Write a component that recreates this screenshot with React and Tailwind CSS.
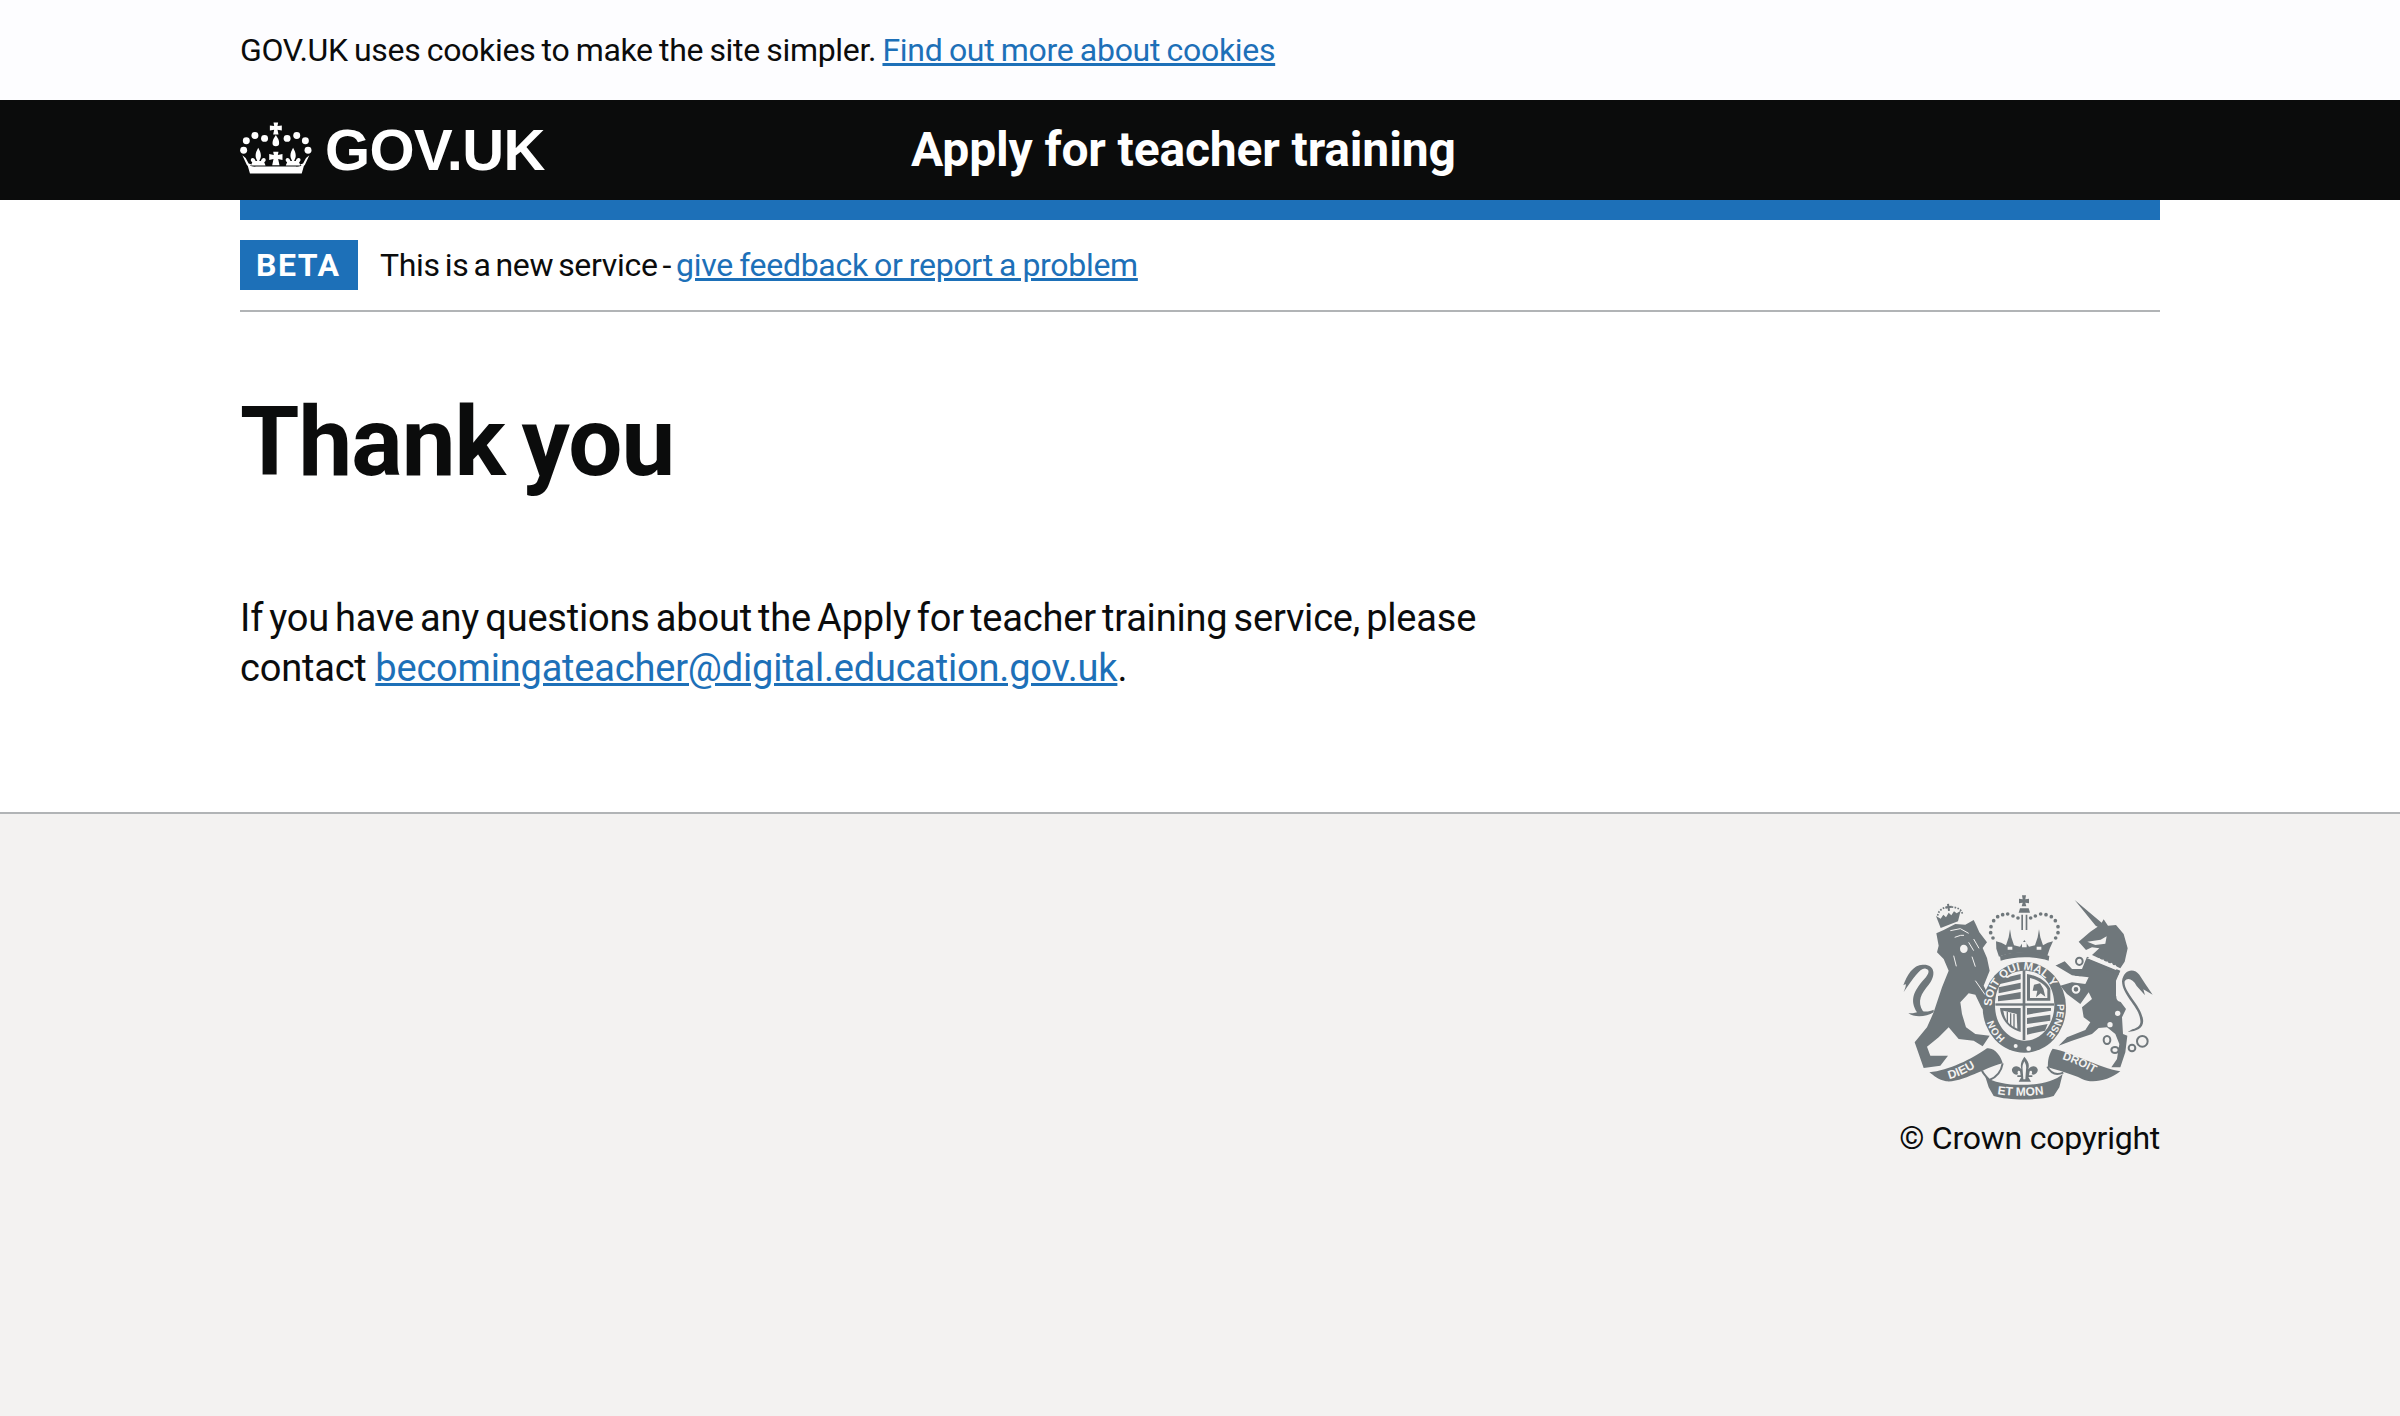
const gray = "#6f777b";
const bg = "#f3f2f1";

function Fleur({ x }) {
  return (
    <g transform={`translate(${x} 0)`}>
      <path d="M0 140c5 9 8 16 8 24 0 6-3 11-5 16h5c2-8 9-11 13-7 3 4 1 9-3 11l4 10H-4-0L-22 194l4-10c-4-2-6-7-3-11 4-4 11-1 13 7h5c-2-5-5-10-5-16 0-8 3-15 8-24z" />
    </g>
  );
}

function Crown() {
  return (
    <svg viewBox="60 60 220 165" width="73" height="55" className="block -mt-[4px]" aria-label="crown">
      <g fill="#fff">
        {[[79,119],[105,103],[134,112],[202,112],[231,103],[257,119],[71,148],[265,148]].map(([x,y],i)=>(<circle key={i} cx={x} cy={y} r="10.5"/>))}
        <path d="M161 64h14l-2 11 13-2v15l-13-2 3 14h-16l3-14-13 2V73l13 2z"/>
        <path d="M168 102c6 9 10 16 10 24a10 10 0 0 1-20 0c0-8 4-15 10-24z"/>
        <Fleur x={115} />
        <Fleur x={220} />
        <path d="M160 152h16l-2 10 14-3v18l-13-3 4 19h-22l4-19-13 3v-18l14 3z"/>
        <path d="M67 163l10 8 9 17 9 3-6 5-8-3zM269 163l-10 8-9 17-9 3 6 5 8-3z"/>
        <path d="M82 190c8 6 18 8 28 7h116c10 1 20-1 28-7l-8 28H90z"/>
      </g>
    </svg>
  );
}

function Crest() {
  return (
    <svg viewBox="130 70 756 621" width="252" height="207" className="block mr-[6px]" aria-label="Royal coat of arms">
      <defs>
        <path id="garterTop" d="M399 410A98 112 0 0 1 595 410"/>
        <path id="garterRight" d="M595 398A98 112 0 0 1 556 500"/>
        <path id="garterLeft" d="M440 502A98 112 0 0 1 399 420"/>
        <path id="ribL" d="M272 625C305 618 345 595 378 572"/>
        <path id="ribC" d="M414 670C465 678 530 678 584 666"/>
        <path id="ribR" d="M610 565C650 578 695 600 730 622"/>
      </defs>
      <g fill={gray}>
        {/* lion */}
        <path d="M233 188l22-10 35-18 30 2 25-14 7 14 10 23 23 30-13 17 13 30 8 38-18 45 20 40 13 35-20 17-20-27-18-38-20-4-25 27 5 35 12 40 28 20 43 5-21 32-27-17-45-5-30-35-30 30-35 28 10 27 53 0-23 30-50 7-27-77 37-45 20-45 25-75 20-50-15-35-20-20 5-20z"/>
        <g fill="none" stroke={bg} strokeWidth="3">
          <path d="M350 330l50 72"/>
          <path d="M275 180l30-6 25 14M288 200l18-6 10 0"/>
          <path d="M330 215l15 25M345 205l16 28M285 255l8 32M340 258l10 30"/>
        </g>
        <path d="M315 222c7 0 12 5 12 12s-5 13-12 13-11-6-11-13 4-12 11-12z" fill={bg}/>
        {/* lion tail */}
        <path d="M225 425c-22 14-58 16-76 3 10 0 18 0 26-3-22-35-12-62 22-100 14-16 18-28 4-31-18-3-35 28-66 70 3-8 8-18 6-24l-7 4c10-30 30-62 58-62 36-2 42 30 18 60-22 26-36 50-17 80 14 2 22-1 32-5z"/>
        {/* lion crown */}
        <path d="M246 172l-14-36 14 8 8-12 8 8 8-14 8 8 8-12 8 6 12-8-8 32-52 20z"/>
        <path d="M260 108l6-1-1-7 6-1 1 7 7-1 1 6-7 1 1 8-6 1-1-8-6 1z"/>
        <g fill="none" stroke={gray} strokeWidth="5" strokeDasharray="5 4"><path d="M237 135c2-18 22-28 40-26 18 0 34 8 34 22"/></g>
        {/* centre crown */}
        <path d="M490 74h12l-2 12 11-2v14l-11-2 3 11h-14l3-11-11 2V84l11 2z"/>
        <path d="M484 113h26l4 13h-34z"/>
        <path d="M488 132h5v46h-5zM501 132h5v46h-5z"/>
        {[[405,150],[397,168],[396,186],[417,138],[432,132],[447,130],[463,136],[478,142],[516,142],[530,136],[546,130],[562,132],[578,138],[590,150],[598,168],[598,186],[403,202],[591,202]].map(([x,y],i)=>(<circle key={i} cx={x} cy={y} r="5.5"/>))}
        <path d="M412 212l16 4 14 8 8-24 4-24 4 24 8 24 18 4 13-20 14 20 18-4 8-24 4-24 4 24 8 24 14-8 16-4-10 22-8 24c-40-16-108-16-144 0l-8-24z"/>
        <g fill={bg}>
          <path d="M447 228h14v9h-14zM534 228h14v9h-14zM490 214h14v16h-14z"/>
        </g>
        <path d="M424 256c40-16 108-16 148 0l-2 14c-40-14-104-14-144 0z"/>
        {/* garter */}
        <ellipse cx="497" cy="410" rx="125" ry="136"/>
        {/* unicorn head and horn */}
        <path d="M648 88L729 156l6-10 13 19 24-2 23 27 12 43-9 40-13 20-85-40 22-20-22-3-18 8-22-25 35-30 22-15-6-3z"/>
        <path d="M686 213l40-6 18-10-4 22-30 4z" fill={bg}/>
        {/* unicorn body */}
        <path d="M685 258l100 42-13 30 0 45 30 40-12 25 3 50 13 5-6 50-15 45-27 0 17-25 7-45-12-30-25-20-25 2-20 18-60 20-40 15 25-25 55-22 15-23-20-15-5-30 30-25-10-20-25 35-40-30-20-25 35-10 40 5 10-20-40-5-35-25-25-5 28-13 22 23 30 0z"/>
        <path d="M592 285l26-11 22 23 30 0-5 20-25-3z"/>
        <path d="M690 262l6-8 6 8 8-4 4 8 8-4 4 8 8-4 4 10 8-4 4 8 10-4 4 10 6-4 6 10-4 6-88-36z" fill={bg}/>
        <path d="M688 266l94 38-3 9-95-41z"/>
        {/* unicorn tail */}
        <path d="M790 332c4-36 36-42 52-20l18 28 22 32-28-16 5 18-25-28c-12-22-28-26-36-14-5 30 50 72 55 114 4 24-16 36-46 38l14-8c28-8 26-22 22-38-8-34-52-66-53-106z"/>
        {/* chain */}
        <g fill="none" stroke={gray} strokeWidth="6">
          <ellipse cx="745" cy="508" rx="10" ry="12"/>
          <ellipse cx="769" cy="538" rx="11" ry="9"/>
          <ellipse cx="820" cy="532" rx="10" ry="10"/>
          <ellipse cx="851" cy="512" rx="16" ry="16"/>
          <ellipse cx="662" cy="272" rx="10" ry="11"/>
        </g>
        <g fill="none" stroke={bg} strokeWidth="6">
          <ellipse cx="652" cy="356" rx="10" ry="10"/>
          <ellipse cx="786" cy="380" rx="10" ry="10"/>
        </g>
        <circle cx="777" cy="428" r="8" fill={bg}/>
        <circle cx="754" cy="462" r="8" fill={bg}/>
        {/* ribbon */}
        <path d="M212 605C270 600 340 565 385 533 410 530 428 560 432 578 400 585 375 600 360 605 325 620 290 635 262 632 240 628 225 615 212 605z"/>
        <path d="M582 534C640 545 720 590 785 602 750 630 700 640 670 625 640 610 600 600 568 590 566 570 572 548 582 534z"/>
        <path d="M380 618C425 652 570 652 612 610L602 650 585 676C540 690 450 690 405 676L390 650z"/>
        <g fill="none" stroke={gray} strokeWidth="6">
          <path d="M432 578C428 602 412 620 392 628 382 618 374 610 370 600"/>
          <path d="M566 588C575 606 590 616 614 606"/>
        </g>
      </g>
      {/* shield */}
      <path d="M497 300c-55 0-88 44-88 104 0 60 40 104 88 106s90-46 90-106c0-60-35-104-90-104z" fill={bg}/>
      <g fill={gray}>
        <rect x="492" y="300" width="8" height="208"/>
        <rect x="410" y="398" width="176" height="7"/>
        <path d="M426 324l60-14v16l-62 14zM420 350l66-14v18l-66 14zM418 376l68-12v20l-68 8z"/>
        <path d="M505 310c30 4 58 20 70 44v36h-70zM514 322v60h52v-26c-8-16-32-30-52-34z" fillRule="evenodd"/>
        <path d="M526 342l18-4 10 16 6 24-14-10-14 12 4-20-14 0z"/>
        <path d="M505 412h72v8l-72 12zM505 442l70-10v18l-70 10zM505 472l62-12-8 20-54 12z"/>
        <path d="M424 412h62v72c-30-8-58-32-62-72z"/>
      </g>
      <path d="M434 420l40 10 2 44c-24-10-38-26-42-54z" fill={bg}/>
      <path d="M446 424v34M456 428v38M466 430v40" stroke={gray} strokeWidth="4"/>
      <circle cx="471" cy="526" r="6" fill={bg}/>
      <circle cx="510" cy="534" r="7" fill={bg}/>
      {/* fleur between ribbons */}
      <path d="M497 558c12 14 16 22 12 38 8-12 24-12 28 0 2 12-12 20-18 14 4-8-2-12-6-8l-2 12h10v5h-12l8 14h-37l8-14h-12v-5h10l-2-12c-4-4-10 0-6 8-6 6-20-2-18-14 4-12 20-12 28 0-4-16 0-24 9-38z" fill={gray}/>
      <path d="M497 572c4 8 7 14 5 26l-2 28h-6l-2-28c-2-12 1-18 5-26z" fill={bg}/>
      <g fill={bg} fontFamily="'Liberation Sans', sans-serif" fontWeight="700">
        <text fontSize="34"><textPath href="#garterTop" startOffset="1%">SOIT QUI MAL Y</textPath></text>
        <text fontSize="30"><textPath href="#garterRight" startOffset="2%">PENSE</textPath></text>
        <text fontSize="30"><textPath href="#garterLeft">HON</textPath></text>
        <text fontSize="36"><textPath href="#ribL">DIEU</textPath></text>
        <text fontSize="36"><textPath href="#ribC" startOffset="1%">ET MON</textPath></text>
        <text fontSize="34"><textPath href="#ribR">DROIT</textPath></text>
      </g>
    </svg>
  );
}

export default function App() {
  const font = "font-['Roboto',sans-serif]";
  return (
    <div className={`min-h-[1416px] flex flex-col bg-white text-[#0b0c0c] ${font}`}>
      <div className="h-[100px] bg-[#fdfdff] flex items-center px-[240px] text-[32px] leading-[40px] tracking-[-0.3px]">
        <p><span className="[word-spacing:-1.4px]">GOV.UK uses cookies to make the site simpler. </span><a className="text-[#1d70b8] underline [word-spacing:-1.2px]" href="#">Find out more about cookies</a></p>
      </div>
      <header className="h-[100px] bg-[#0b0c0c] px-[240px] flex items-center text-white">
        <div className="w-[671px] flex items-center gap-[12px]">
          <Crown />
          <span className="font-['Liberation_Sans',sans-serif] font-bold text-[58px] leading-[64px] tracking-[-0.6px]">GOV.UK</span>
        </div>
        <span className="font-bold text-[48px] leading-[60px] tracking-[-0.15px]">Apply for teacher training</span>
      </header>
      <main className="px-[240px] flex-none">
        <div className="h-[20px] bg-[#1d70b8]" />
        <div className="h-[92px] border-b-2 border-[#b1b4b6] flex items-start pt-[20px]">
          <span className="bg-[#1d70b8] text-white font-bold text-[32px] leading-[50px] tracking-[1.5px] px-[16px] h-[50px] w-[118px]">BETA</span>
          <p className="ml-[22px] text-[32px] leading-[50px] tracking-[-0.3px]"><span className="[word-spacing:-2.7px]">This is a new service - </span><a className="text-[#1d70b8] underline [word-spacing:-1.4px]" href="#">give feedback or report a problem</a></p>
        </div>
        <h1 className="mt-[80px] font-bold text-[96px] leading-[100px] tracking-[-1px] [word-spacing:-6px]">Thank you</h1>
        <p className="mt-[101px] w-[1270px] text-[38px] leading-[50px] tracking-[-0.2px]"><span className="[word-spacing:-3.1px]">If you have any questions about the Apply for teacher training service, please </span><span className="[word-spacing:-0.5px]">contact </span><a className="text-[#1d70b8] underline" href="#">becomingateacher@digital.education.gov.uk</a>.</p>
      </main>
      <footer className="mt-[119px] flex-1 bg-[#f3f2f1] border-t-2 border-[#b1b4b6] px-[240px] pt-[80px] flex flex-col items-end">
        <Crest />
        <p className="mt-[17px] text-[32px] leading-[40px] tracking-[-0.25px]">© Crown copyright</p>
      </footer>
    </div>
  );
}
